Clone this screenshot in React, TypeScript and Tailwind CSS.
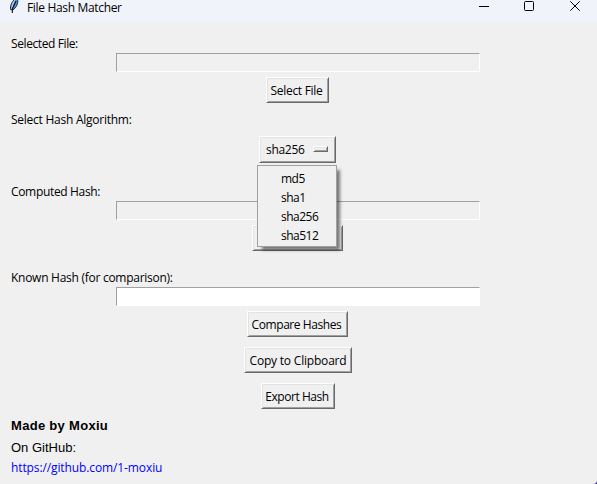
import type { ReactNode } from "react";

function Label({ className = "", children }: { className?: string; children: ReactNode }) {
  return <div className={`ml-[11px] h-[18px] self-start whitespace-nowrap ${className}`}>{children}</div>;
}

function Entry({ className = "" }: { className?: string }) {
  return (
    <div
      className={`h-[19px] w-[364px] shrink-0 border border-t-[#a0a0a0] border-r-white border-b-white border-l-[#a0a0a0] ${className}`}
    />
  );
}

const raised =
  "shrink-0 border border-t-white border-l-white border-r-[#696969] border-b-[#696969] shadow-[inset_1px_1px_0_#e3e3e3,inset_-1px_-1px_0_#a0a0a0] bg-[#f0f0f0]";

function Button({ className = "", children }: { className?: string; children?: ReactNode }) {
  return (
    <button className={`flex h-[26px] items-center justify-center pt-[2px] whitespace-nowrap leading-[18px] ${raised} ${className}`}>
      {children}
    </button>
  );
}

function Feather() {
  return (
    <svg width="12" height="14" viewBox="0 0 12 14" className="ml-2 shrink-0">
      <path d="M9.5 -1 C10.6 3 8.3 8 4.8 9.8 L2.7 9.8 C1.8 6 4 1.5 7 -1Z" fill="#4b8fe0" stroke="#1c2634" strokeWidth="1" />
      <path d="M7 -1 C4.4 2 3 6 3.3 9 L4.7 9 C4.8 5 6.3 2 8.2 -1Z" fill="#a9c9f2" />
      <path d="M8 1 L4.5 8.5 L4.3 13" fill="none" stroke="#111" strokeWidth="1.1" />
    </svg>
  );
}

function TitleBar() {
  return (
    <header className="flex h-[22px] items-start bg-[#f0f3fa]">
      <Feather />
      <span className="ml-[7px] whitespace-nowrap leading-[16px] tracking-[-0.33px]">File Hash Matcher</span>
      <div className="mr-[17px] ml-auto flex gap-[36px]">
        <svg width="10" height="12" className="shrink-0">
          <path d="M0 6.5H10" stroke="#000" />
        </svg>
        <svg width="10" height="12" className="ml-[-1px] shrink-0">
          <rect x="0.5" y="1.5" width="9" height="9" rx="1" fill="none" stroke="#000" />
        </svg>
        <svg width="10" height="12" className="shrink-0">
          <path d="M0.3 1.3L9.7 10.7M9.7 1.3L0.3 10.7" stroke="#000" />
        </svg>
      </div>
    </header>
  );
}

const algorithms = ["md5", "sha1", "sha256", "sha512"];

function AlgorithmPicker() {
  return (
    <div className={`relative mt-[8px] mr-[2px] flex h-[27px] w-[77px] items-center ${raised}`}>
      <span className="mt-px ml-[6px] leading-[18px] tracking-[-0.3px]">sha256</span>
      <span className={`mr-[7px] mb-px ml-auto h-[6px] w-[15px] ${raised}`} />
      <ul className="absolute top-[28px] left-[-3px] z-10 h-[82px] w-[80px] border border-[#a0a0a0] bg-[#f0f0f0] pt-[3px] shadow-[4px_4px_3px_-1px_rgba(0,0,0,0.5)]">
        {algorithms.map((name) => (
          <li key={name} className="h-[19px] pl-[23px] leading-[19px] tracking-[-0.5px]">
            {name}
          </li>
        ))}
      </ul>
    </div>
  );
}

export default function App() {
  return (
    <div className="h-[484px] w-[597px] overflow-hidden bg-[#303c90]">
      <div className="flex h-full flex-col rounded-br-[4px] bg-[#f0f0f0] font-['Open_Sans',sans-serif] text-[12px] text-black">
        <TitleBar />
        <main className="flex flex-col items-center">
          <Label className="mt-[12px] leading-[20px] tracking-[-0.4px]">Selected File:</Label>
          <Entry className="mt-px ml-[-1px]" />
          <Button className="mt-[5px] mr-[2px] w-[63px] pr-[2px] tracking-[-0.3px]">Select File</Button>
          <Label className="mt-[7px] leading-[20px] tracking-[-0.25px]">Select Hash Algorithm:</Label>
          <AlgorithmPicker />
          <Label className="mt-[19px] leading-[20px] tracking-[-0.33px]">Computed Hash:</Label>
          <Entry className="mt-px ml-[-1px]" />
          <Button className="mt-[5px] mr-[2px] w-[91px]" />
          <Label className="mt-[17px] leading-[20px] tracking-[-0.27px]">Known Hash (for comparison):</Label>
          <Entry className="mt-px ml-[-1px] bg-white" />
          <Button className="mt-[5px] mr-[2px] w-[101px] pr-[2px] tracking-[-0.42px]">Compare Hashes</Button>
          <Button className="mt-[10px] mr-px w-[108px] tracking-[-0.2px]">Copy to Clipboard</Button>
          <Button className="mt-[10px] mr-px w-[74px] pr-[2px] tracking-[-0.45px]">Export Hash</Button>
          <Label className="mt-[8px] font-['Liberation_Sans',sans-serif] text-[13px] leading-[18px] font-bold tracking-[0.3px]">
            Made by Moxiu
          </Label>
          <Label className="mt-[4px] font-['Liberation_Sans',sans-serif] text-[13px] leading-[18px]">On GitHub:</Label>
          <Label className="mt-px leading-[20px] tracking-[-0.11px] text-[#0000ff]">https://github.com/1-moxiu</Label>
        </main>
      </div>
    </div>
  );
}
